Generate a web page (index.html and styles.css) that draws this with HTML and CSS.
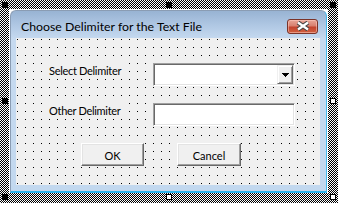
FILE: index.html
```html
<!DOCTYPE html>
<html>
<head>
    <title>Choose Delimiter for the Text File</title>
    <link rel="stylesheet" href="styles.css">
</head>
<body>
    <div class="designer">
        <div class="canvas">
            <div class="window">
                <div class="titlebar">
                    <span class="caption">Choose Delimiter for the Text File</span>
                    <span class="close-btn">
                        <svg width="14" height="10" viewBox="0 0 14 10">
                            <path d="M2 1.5 L12 8.5 M12 1.5 L2 8.5" stroke="#454545" stroke-width="4.4"/>
                            <path d="M2 1.5 L12 8.5 M12 1.5 L2 8.5" stroke="#fff" stroke-width="2.2"/>
                        </svg>
                    </span>
                </div>
                <div class="frame">
                    <div class="form-body">
                        <div class="row">
                            <span class="label">Select Delimiter</span>
                            <div class="combo">
                                <span class="drop-btn">
                                    <svg width="7" height="4" viewBox="0 0 7 4" shape-rendering="crispEdges">
                                        <rect x="0" y="0" width="7" height="1" fill="#000"/>
                                        <rect x="1" y="1" width="5" height="1" fill="#000"/>
                                        <rect x="2" y="2" width="3" height="1" fill="#000"/>
                                        <rect x="3" y="3" width="1" height="1" fill="#000"/>
                                    </svg>
                                </span>
                            </div>
                        </div>
                        <div class="row">
                            <span class="label">Other Delimiter</span>
                            <div class="textbox"></div>
                        </div>
                        <div class="row buttons">
                            <span class="btn">OK</span>
                            <span class="btn btn-cancel">Cancel</span>
                        </div>
                    </div>
                </div>
            </div>
        </div>

        <!-- selection handles -->
        <span class="handle h-tl"></span>
        <span class="handle h-tm"></span>
        <span class="handle h-tr"></span>
        <span class="handle h-ml"></span>
        <span class="handle open h-mr"></span>
        <span class="handle h-bl"></span>
        <span class="handle open h-bm"></span>
        <span class="handle open h-br"></span>
    </div>
</body>
</html>
```

FILE: styles.css
```css
body {
    margin: 0;
    font-family: Lato, "Liberation Sans", sans-serif;
}

.designer {
    position: relative;
    width: 338px;
    height: 203px;
    box-sizing: border-box;
    padding: 9px 10px 10px 9px;
    background-color: #fff;
    background-image: repeating-conic-gradient(#000 0 25%, #fff 0 50%);
    background-size: 2px 2px;
}

.canvas {
    width: 319px;
    height: 184px;
    box-sizing: border-box;
    padding: 1px 1px 0 1px;
    background: #fff;
}

.window {
    height: 183px;
    box-sizing: border-box;
    display: flex;
    flex-direction: column;
    border: 1px solid #8a9cb3;
    border-right-color: #45b9ea;
    border-bottom: 2px solid #2fb3ea;
    border-radius: 6px 6px 0 0;
    background: linear-gradient(#98b3d3 0, #afc7e3 14px, #c6daf0 28px, #c2d8ef 100%);
}

.titlebar {
    height: 27px;
    box-sizing: border-box;
    display: flex;
    align-items: center;
    padding: 3px 8px 0 10px;
}

.caption {
    flex: 1;
    font-size: 12.3px;
    color: #000;
    white-space: nowrap;
}

.close-btn {
    width: 31px;
    height: 15px;
    box-sizing: border-box;
    display: flex;
    align-items: center;
    justify-content: center;
    border: 1px solid #7a3328;
    border-radius: 3px;
    background: linear-gradient(#e8a597, #d8806f 45%, #c2432e 55%, #d0603f);
    box-shadow: inset 0 0 0 1px rgba(255, 210, 200, 0.5);
}

.frame {
    flex: 1;
    padding: 0 6px 6px 5px;
}

.form-body {
    height: 147px;
    box-sizing: border-box;
    display: flex;
    flex-direction: column;
    gap: 17px;
    padding: 25px 0 0 33px;
    background-color: #f0f0f0;
    background-image: conic-gradient(from 270deg at 1px 1px, #000 90deg, transparent 0);
    background-size: 8px 8px;
    background-position: 1px 1px;
}

.row {
    display: flex;
    align-items: flex-start;
}

.label {
    width: 80px;
    height: 16px;
    margin-right: 24px;
    background: #f0f0f0;
    font-size: 11px;
    line-height: 16px;
    letter-spacing: -0.3px;
    color: #000;
    white-space: nowrap;
}

.combo,
.textbox {
    width: 142px;
    height: 23px;
    box-sizing: border-box;
    padding: 1px;
    border: 1px solid;
    border-color: #a0a0a0 #fff #fff #a0a0a0;
    box-shadow: inset 1px 1px 0 #696969, inset -1px -1px 0 #e3e3e3;
    background: #fff;
}

.combo {
    display: flex;
    justify-content: flex-end;
}

.drop-btn {
    width: 16px;
    height: 19px;
    box-sizing: border-box;
    display: flex;
    align-items: center;
    justify-content: center;
    border: 1px solid;
    border-color: #f0f0f0 #696969 #696969 #f0f0f0;
    box-shadow: inset 1px 1px 0 #fff, inset -1px -1px 0 #a0a0a0;
    background: #f0f0f0;
}

.buttons {
    padding-left: 32px;
    gap: 33px;
}

.btn {
    width: 63px;
    height: 23px;
    box-sizing: border-box;
    display: flex;
    align-items: center;
    justify-content: center;
    padding-top: 2px;
    border: 1px solid;
    border-color: #fff #696969 #696969 #fff;
    box-shadow: inset -1px -1px 0 #a0a0a0, inset 1px 1px 0 #e3e3e3;
    background: #f0f0f0;
    font-size: 11px;
    color: #000;
}

.btn-cancel {
    width: 64px;
}

.handle {
    position: absolute;
    width: 6px;
    height: 6px;
    box-sizing: border-box;
    background: #000;
}

.handle.open {
    background: #fff;
    border: 1px solid #000;
}

.h-tl { left: 2px; top: 2px; }
.h-tm { left: 166px; top: 2px; }
.h-tr { left: 330px; top: 2px; }
.h-ml { left: 2px; top: 98px; }
.h-mr { left: 330px; top: 98px; }
.h-bl { left: 2px; top: 194px; }
.h-bm { left: 166px; top: 194px; }
.h-br { left: 330px; top: 194px; }
```
